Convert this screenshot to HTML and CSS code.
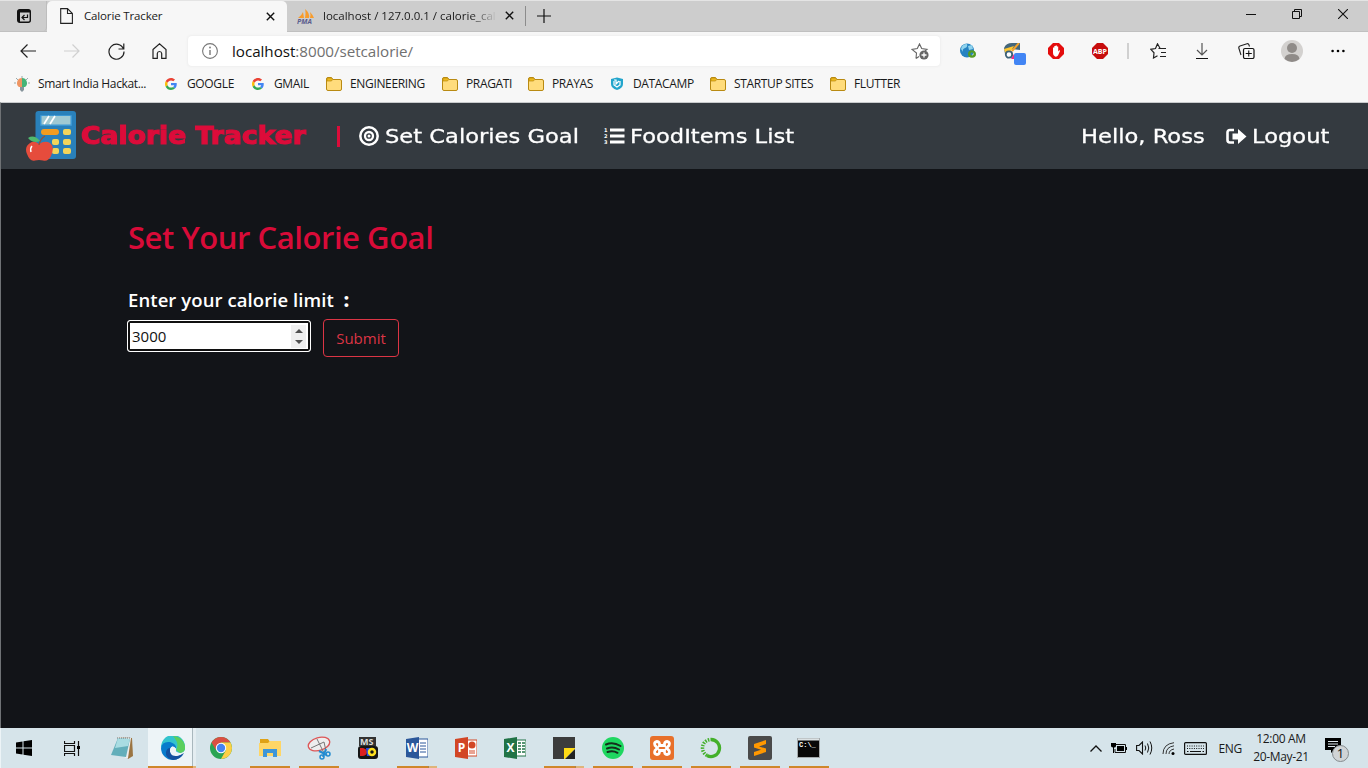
FILE: index.html
```html
<!DOCTYPE html>
<html lang="en">
<head>
<meta charset="utf-8">
<title>Calorie Tracker</title>
<link rel="stylesheet" href="styles.css">
</head>
<body>
<svg width="0" height="0" class="defs">
  <symbol id="folder" viewBox="0 0 16 16"><path d="M.5 3Q.5 1.5 2 1.5H5.5L7 3.5H14Q15.5 3.500 15.5 5V13Q15.500 14.500 14 14.500H2Q.5 14.500 .5 13Z" fill="#ffdc7c" stroke="#b98a12"/><path d="M1 2H5.500L6.500 3.500L5.500 5H1Z" fill="#edb91d" stroke="#b98a12" stroke-width=".7"/></symbol>
  <symbol id="google" viewBox="0 0 48 48"><path fill="#EA4335" d="M24 9.500c3.540 0 6.710 1.220 9.210 3.600l6.850-6.850C35.900 2.380 30.470 0 24 0 14.620 0 6.510 5.380 2.560 13.220l7.980 6.190C12.430 13.720 17.740 9.500 24 9.500z"/><path fill="#4285F4" d="M46.980 24.550c0-1.570-.15-3.090-.38-4.550H24v9.020h12.940c-.58 2.960-2.260 5.480-4.780 7.180l7.730 6c4.510-4.180 7.090-10.360 7.090-17.650z"/><path fill="#FBBC05" d="M10.530 28.590c-.48-1.450-.76-2.990-.76-4.590s.27-3.140.76-4.590l-7.980-6.190C.92 16.460 0 20.120 0 24s.92 7.540 2.560 10.780z"/><path fill="#34A853" d="M24 48c6.480 0 11.930-2.130 15.890-5.810l-7.730-6c-2.150 1.450-4.920 2.300-8.160 2.300-6.260 0-11.570-4.220-13.470-9.910l-7.980 6.190C6.510 42.620 14.620 48 24 48z"/></symbol>
</svg>

<header class="titlebar">
  <div class="tab-actions"><svg width="14" height="14" viewBox="0 0 14 14"><rect x=".7" y=".7" width="12.600" height="12.600" rx="2" fill="none" stroke="#111" stroke-width="1.400"/><path d="M1 1H13V3.500H1ZM1 1H3V13H1Z" fill="#111"/><path d="M10.500 5.500V8.500H5.500M7.500 6L5 8.500L7.500 11" fill="none" stroke="#111" stroke-width="1.200"/></svg></div>
  <div class="tab active">
    <svg width="13" height="16" viewBox="0 0 13 16"><path d="M.7.6H7.500L12.400 5.500V15.400H.7ZM7.500.6V5.500H12.400" fill="none" stroke="#222" stroke-width="1.100"/></svg>
    <span class="tab-title first">Calorie Tracker</span>
    <svg class="close" width="9" height="9" viewBox="0 0 9 9"><path d="M.8.8L8.200 8.200M8.200.8L.8 8.200" stroke="#111" stroke-width="1.400"/></svg>
  </div>
  <div class="tab second">
    <svg width="18" height="16" viewBox="0 0 18 16"><path d="M1 10Q5 7 6 4L7 10ZM8 10Q9 4 8 1Q13 5 12 10ZM13 10Q14 7 13 4Q16 7 17 10Z" fill="#f89c2c"/><text x="0" y="15.500" class="pma">PMA</text></svg>
    <span class="tab-title fade">localhost / 127.0.0.1 / calorie_cal</span>
    <svg class="close" width="9" height="9" viewBox="0 0 9 9"><path d="M.8.8L8.200 8.200M8.200.8L.8 8.200" stroke="#111" stroke-width="1.400"/></svg>
  </div>
  <svg class="plus" width="14" height="14" viewBox="0 0 14 14"><path d="M7 0V14M0 7H14" stroke="#111" stroke-width="1.200"/></svg>
  <div class="window-buttons">
    <svg width="10" height="10"><path d="M0 5.500H10" stroke="#111"/></svg>
    <svg width="10" height="10"><path d="M.5 2.500H7.500V9.500H.5ZM2.500 2.500V.5H9.500V7.500H7.500" fill="none" stroke="#111"/></svg>
    <svg width="10" height="10"><path d="M0 0L10 10M10 0L0 10" stroke="#111" stroke-width="1.100"/></svg>
  </div>
</header>

<section class="toolbar">
  <div class="cell"><svg width="16" height="14" viewBox="0 0 16 14"><path d="M7.500.5L1 7L7.500 13.500M1 7H16" fill="none" stroke="#222" stroke-width="1.200"/></svg></div>
  <div class="cell"><svg width="16" height="14" viewBox="0 0 16 14"><path d="M8.500.5L15 7L8.500 13.500M15 7H0" fill="none" stroke="#d0d0d0" stroke-width="1.200"/></svg></div>
  <div class="cell"><svg width="17" height="17" viewBox="0 0 17 17"><path d="M15.500 6A7.500 7.500 0 1 0 16 8.500M15.800.5V6H10.500" fill="none" stroke="#222" stroke-width="1.200"/></svg></div>
  <div class="cell"><svg width="16" height="16" viewBox="0 0 16 16"><path d="M1 6.500L7.500 .8L14 6.500V15.300H9.700V10.500Q9.500 8.500 7.500 8.500T5.300 10.500V15.300H1Z" fill="none" stroke="#222" stroke-width="1.200"/></svg></div>
  <div class="address">
    <svg width="16" height="16" viewBox="0 0 16 16"><circle cx="8" cy="8" r="7.400" fill="none" stroke="#777" stroke-width="1.100"/><path d="M8 7V12" stroke="#777" stroke-width="1.400"/><circle cx="8" cy="4.500" r=".9" fill="#777"/></svg>
    <span class="url">localhost<span>:8000/setcalorie/</span></span>
    <svg width="19" height="17" viewBox="0 0 19 17"><path d="M5 15.500L5.500 10L1 6.400L6.300 5.500L8.500.9L10.700 5.500L16 6.400L14 8M5 15.500L8 13.500" fill="none" stroke="#666" stroke-width="1.100"/><circle cx="13" cy="12" r="4.600" fill="#666"/><path d="M13 9.500V14.500M10.500 12H15.500" stroke="#fff" stroke-width="1.300"/></svg>
  </div>
  <div class="cell"><svg width="16" height="16" viewBox="0 0 16 16"><circle cx="7" cy="7.500" r="7" fill="#2683c2"/><path d="M1 6Q2 1 7 1Q8 4 5 5T3 9ZM8 3L12 2L13 6L9 7Z" fill="#8fd3ed"/><ellipse cx="12" cy="11" rx="2.800" ry="2.600" fill="none" stroke="#549d23" stroke-width="2.400"/></svg></div>
  <div class="cell"><svg class="paint" width="22" height="22" viewBox="0 0 22 22"><path d="M0 5Q2 0 8 0H16V7L8 6L1 11Z" fill="#45677a"/><path d="M0 6L10 3L7 8L2 12Z" fill="#ffc72e"/><path d="M15 0L8 8" stroke="#f4a22b" stroke-width="2"/><circle cx="5" cy="11.500" r="3.200" fill="#fff" stroke="#3c6178" stroke-width="1.800"/><path d="M7 16L10 11V16Z" fill="#f42b89"/><rect x="10" y="10" width="12" height="12" rx="2" fill="#4285f4"/></svg></div>
  <div class="cell"><svg width="16" height="16" viewBox="0 0 16 16"><path d="M5 0H11L16 5V11L11 16H5L0 11V5Z" fill="#e40d0d"/><path d="M5 8V4.500H6.300V3H7.600V2.500H8.900V3.500H10.200V8.500L11.500 7L12 8L10 12.500Q9 14 7 13.500Q5 13 5 10Z" fill="#fff"/></svg></div>
  <div class="cell"><svg width="16" height="16" viewBox="0 0 16 16"><path d="M5 0H11L16 5V11L11 16H5L0 11V5Z" fill="#c70d0d"/><text x="8" y="10.800" class="abp" textLength="14" lengthAdjust="spacingAndGlyphs">ABP</text></svg></div>
  <i class="rule"></i>
  <div class="cell"><svg width="17" height="16" viewBox="0 0 17 16"><path d="M10 5.200L7.500.8L5.500 5.500L.8 6.300L4 9.800L3.500 15L7.500 12.700M8.500 5.500H16M11 9.500H16M10 13.500H16" fill="none" stroke="#222" stroke-width="1.200"/></svg></div>
  <div class="cell"><svg width="12" height="16" viewBox="0 0 12 16"><path d="M6 0V12M1 7L6 12L11 7" fill="none" stroke="#555" stroke-width="1.200"/><path d="M0 15.500H12" stroke="#111"/></svg></div>
  <div class="cell"><svg width="17" height="16" viewBox="0 0 17 16"><path d="M3 12L.8 5Q.5 3.500 2 3L9 .7Q10.500.4 11 2L11.500 3.500" fill="none" stroke="#222" stroke-width="1.100"/><rect x="5.500" y="5.500" width="10.500" height="10" rx="1.500" fill="none" stroke="#111" stroke-width="1.200"/><path d="M10.750 7.500V13.500M7.700 10.500H13.800" stroke="#111" stroke-width="1.100"/></svg></div>
  <div class="cell profile"><svg width="22" height="22" viewBox="0 0 22 22"><circle cx="11" cy="11" r="11" fill="#d3d1cf"/><circle cx="11" cy="8" r="5" fill="#8f8b88"/><path d="M3.500 19Q4 14 11 14T18.500 19Q11 25 3.500 19Z" fill="#8f8b88"/></svg></div>
  <div class="cell"><svg width="14" height="4"><circle cx="1.600" cy="2" r="1.300"/><circle cx="7" cy="2" r="1.300"/><circle cx="12.400" cy="2" r="1.300"/></svg></div>
</section>

<nav class="bookmarks">
  <a><svg viewBox="0 0 16 16"><path d="M8 0V2M2 2L4 4M14 2L12 4M0 7H2M14 7H16" stroke="#9aa"/><path d="M8 2A5 5 0 0 0 5 11H8Z" fill="#ef9563"/><path d="M8 2A5 5 0 0 1 11 11H8Z" fill="#45b478"/><path d="M6 11H10V14L8 16L6 14Z" fill="#86949b"/></svg><span>Smart India Hackat...</span></a>
  <a class="g"><svg viewBox="0 0 16 16"><use href="#google" x="1" y="2" width="12" height="12"/></svg><span>GOOGLE</span></a>
  <a class="g"><svg viewBox="0 0 16 16"><use href="#google" x="1" y="2" width="12" height="12"/></svg><span>GMAIL</span></a>
  <a><svg><use href="#folder"/></svg><span>ENGINEERING</span></a>
  <a><svg><use href="#folder"/></svg><span>PRAGATI</span></a>
  <a><svg><use href="#folder"/></svg><span>PRAYAS</span></a>
  <a class="g"><svg viewBox="0 0 16 16"><path d="M1 3L7 1.500L13 3V8Q13 12 7 14Q1 12 1 8Z" fill="#22a5cc"/><path d="M4 4H6V8L9 5M4 5V9L7 11L10 9V5" fill="none" stroke="#fff" stroke-width="1.200"/></svg><span>DATACAMP</span></a>
  <a><svg><use href="#folder"/></svg><span>STARTUP SITES</span></a>
  <a><svg><use href="#folder"/></svg><span>FLUTTER</span></a>
</nav>

<div class="page">
  <nav class="navbar">
    <svg class="logo" width="50" height="50" viewBox="0 0 50 50"><rect x="9.500" width="40.500" height="48" rx="3" fill="#2980ba"/><rect x="14" y="4" width="32" height="11" rx="1" fill="#3b97d3"/><rect x="15.500" y="5" width="29" height="8.500" fill="#9fc9d3"/><path d="M18 13L23 5M24 13L29 5" stroke="#fff" stroke-width="1.700"/><rect x="15" y="18" width="18" height="6" rx="3" fill="#f29c1f"/><g fill="#f3d55b"><rect x="37" y="18" width="8" height="6" rx="2"/><rect x="26" y="28" width="7" height="6" rx="2"/><rect x="37" y="28" width="8" height="6" rx="2"/><rect x="26" y="37" width="7" height="6" rx="2"/><rect x="37" y="37" width="8" height="6" rx="2"/></g><path d="M13 33Q8 29 4 32Q-2 36 1 43Q4 51 9 49.500Q13 48.500 17 49.500Q22 51 25 45Q29 36 24 32Q19 29 13 33Z" fill="#e64c3c"/><path d="M13 34Q14 28 19 25" fill="none" stroke="#955137" stroke-width="1.400"/><path d="M2 27Q8 23 14 30Q7 33 2 27Z" fill="#4fba6f"/><path d="M5 41Q4 37 6 35" stroke="#fff" stroke-width="1.500" fill="none"/></svg>
    <span class="brand">Calorie Tracker</span>
    <i class="bar"></i>
    <a class="link goal"><svg width="20" height="20" viewBox="0 0 20 20" fill="none" stroke="#fff"><circle cx="10" cy="10" r="8.700" stroke-width="2.500"/><circle cx="10" cy="10" r="4" stroke-width="2.300"/><circle cx="10" cy="10" r="1.500" fill="#fff" stroke="none"/></svg><span>Set Calories Goal</span></a>
    <a class="link items"><svg width="21" height="18" viewBox="0 0 21 18"><path d="M6 3H20.500M6 9H20.500M6 15H20.500" stroke="#fff" stroke-width="3"/><text x="0" y="5" class="digit">1</text><text x="0" y="11" class="digit">2</text><text x="0" y="17" class="digit">3</text></svg><span>FoodItems List</span></a>
    <span class="link hello"><span>Hello, Ross</span></span>
    <a class="link logout"><svg width="21" height="17" viewBox="0 0 21 17"><path d="M8 2H4Q1.500 2 1.500 4.500V12Q1.500 14.500 4 14.500H8" fill="none" stroke="#fff" stroke-width="2.600"/><path d="M6.500 5.500H12V1L20.500 8.500L12 16V11.500H6.500Z" fill="#fff"/></svg><span>Logout</span></a>
  </nav>
  <main class="content">
    <h2>Set Your Calorie Goal</h2>
    <label for="limit">Enter your calorie limit <b>:</b></label>
    <div class="form">
      <div class="number"><input id="limit" value="3000"><div class="spin"><svg width="8" height="18" viewBox="0 0 8 18"><path d="M0 6L4 2L8 6ZM0 13L4 17L8 13Z" fill="#505050"/></svg></div></div>
      <button>Submit</button>
    </div>
  </main>
</div>

<footer class="taskbar">
  <div class="slot start"><svg width="16" height="16" viewBox="0 0 16 16"><path d="M0 2.500L6.500 1.500V7.500H0ZM7.500 1.300L16 0V7.500H7.500ZM0 8.500H6.500V14.500L0 13.500ZM7.500 8.500H16V16L7.500 14.700Z"/></svg></div>
  <div class="slot start"><svg width="17" height="15" viewBox="0 0 17 15"><path d="M.5 0V2.500H10.500V0M.5 15V12.500H10.500V15M.5 4.500H10.500V10.500H.5ZM14.500 0V15" fill="none" stroke="#111" stroke-width="1.200"/><path d="M13 5H16V8H13Z"/></svg></div>
  <div class="slot notes"><svg width="24" height="24" viewBox="0 0 24 24"><path d="M8 1L22 2L23 20L18 23Z" fill="#9b7542"/><path d="M8 1L21 2L18 22L15 22Z" fill="#eee"/><path d="M8 2L20 3L16 21L1 19Z" fill="#63aeba"/><path d="M8 2L20 3L18 10L5 12Z" fill="#a9dce2"/><path d="M7 2H21" stroke="#777" stroke-dasharray="1 1"/></svg></div>
  <div class="slot selected"><svg width="24" height="24" viewBox="0 0 24 24"><path d="M0 12A12 12 0 0 1 24 10Q25 16 19 17Q14 17 15 13Q14 7 7 8Q2 8 0 12Z" fill="#33c3cd"/><path d="M12 0A12 12 0 0 1 24 10Q25 16 19 17L15 14Q19 8 12 0Z" fill="#5bcf5d"/><path d="M0 12Q1 5 9 6Q16 8 15 13Q11 8 9 13Q8 20 15 22Q20 21 23 17Q19 24 12 24A12 12 0 0 1 0 12Z" fill="#087ccc"/><path d="M9 12Q8 21 16 20Q20 19 23 17Q19 24 12 24Q4 22 5 16Q6 12 9 12Z" fill="#13509e"/><path d="M15 12.500Q11 8.500 9.500 13Q10 19 16 19.500Q20 19 22 16.500Q18 18 15 15.500Q14 14 15 12.500Z" fill="#edf4f7"/></svg></div>
  <div class="slot"><svg width="22" height="22" viewBox="0 0 22 22"><circle cx="11" cy="11" r="11" fill="#2aa454"/><path d="M1.500 5.500A11 11 0 0 1 20.500 5.500H11L6 13Z" fill="#da4f43"/><path d="M11 5.500H20.500A11 11 0 0 1 11 22L16 13Z" fill="#fdcf46"/><circle cx="11" cy="11" r="5.200" fill="#fff"/><circle cx="11" cy="11" r="4.200" fill="#4583f1"/></svg></div>
  <div class="slot run"><svg width="22" height="20" viewBox="0 0 22 20"><path d="M1 1H9L11 4H21V18H1Z" fill="#dfa216"/><path d="M1 5H9L11 3H22V18H0V5Z" fill="#ffd666"/><path d="M4 19V11H18V19H14V15H8V19Z" fill="#3e96d9"/></svg></div>
  <div class="slot run"><svg width="24" height="24" viewBox="0 0 24 24"><ellipse cx="12" cy="8" rx="11" ry="6.500" transform="rotate(-16 12 8)" fill="#eee" stroke="#dd5657" stroke-width="1.300"/><path d="M10 3L17 17M4 12L17 6L19 15" stroke="#777" fill="none"/><path d="M12 15L20 19M19 13L16 21" stroke="#238bd0" stroke-width="2"/><circle cx="21" cy="18" r="2" fill="none" stroke="#238bd0" stroke-width="1.500"/><circle cx="15" cy="21" r="2" fill="none" stroke="#238bd0" stroke-width="1.500"/></svg></div>
  <div class="slot"><svg width="20" height="24" viewBox="0 0 20 24"><rect x="1" y="1" width="17" height="9" fill="#333"/><text x="2" y="9" class="ms">MS</text><rect y="10" width="20" height="13" rx="3" fill="#151515"/><path d="M2 12H5Q9 13 9 16T5 20H2Z" fill="#dc2020"/><path d="M8 12H12V20H9Z" fill="#254ce3"/><circle cx="14" cy="16" r="3" fill="none" stroke="#ffe11f" stroke-width="2.500"/></svg></div>
  <div class="slot run multi"><svg width="22" height="22" viewBox="0 0 22 22"><path d="M12 2H22V20H12Z" fill="#fff" stroke="#2b579a"/><path d="M14 6H20M14 9H20M14 12H20M14 15H20" stroke="#2b579a"/><path d="M0 2L13 0V22L0 20Z" fill="#2b579a"/><text x="6.500" y="15" class="office">W</text></svg></div>
  <div class="slot"><svg width="22" height="22" viewBox="0 0 22 22"><path d="M12 3H22V19H12Z" fill="#fff" stroke="#d24625"/><circle cx="17" cy="8" r="3.500" fill="#d24625"/><path d="M14 14H20M14 16H20" stroke="#d24625"/><path d="M0 2L13 0V22L0 20Z" fill="#d24625"/><text x="6.500" y="15" class="office">P</text></svg></div>
  <div class="slot"><svg width="22" height="22" viewBox="0 0 22 22"><path d="M12 3H22V19H12Z" fill="#fff" stroke="#217346"/><path d="M14 6H21M14 9H21M14 12H21M14 15H21" stroke="#217346" stroke-width="1.700"/><path d="M17.500 4V18" stroke="#fff"/><path d="M0 2L13 0V22L0 20Z" fill="#217346"/><text x="6.500" y="15" class="office">X</text></svg></div>
  <div class="slot run multi"><svg width="22" height="22" viewBox="0 0 22 22"><path d="M0 0H22V11L11 22H0Z" fill="#3c3c3c"/><path d="M11 11H22V12L12 22H11Z" fill="#ffdb16"/><path d="M22 12V22H12Z" fill="#222"/></svg></div>
  <div class="slot run"><svg width="22" height="22" viewBox="0 0 22 22"><circle cx="11" cy="11" r="11" fill="#1ed760"/><path d="M4 7.500Q11 4.500 18.500 9M5 11.500Q11 9 17 12.500M5.500 15Q11 13 15.500 15.800" stroke="#142e1c" fill="none" stroke-width="2" stroke-linecap="round"/></svg></div>
  <div class="slot run"><svg width="24" height="24" viewBox="0 0 24 24"><rect width="24" height="24" rx="3" fill="#e8702a"/><path d="M9.500 9.500Q10 5.500 7 5.500Q3.500 6 5 9.500L7.500 12L5 14.500Q3.500 18 7 18.500Q10 18.500 9.500 14.500H14.500Q14 18.500 17 18.500Q20.500 18 19 14.500L16.500 12L19 9.500Q20.500 6 17 5.500Q14 5.500 14.500 9.500Z" fill="none" stroke="#fff" stroke-width="2.800"/></svg></div>
  <div class="slot run"><svg width="22" height="22" viewBox="0 0 22 22"><path d="M11 2.500A8.500 8.500 0 1 1 7 18.500" fill="none" stroke="#43b02a" stroke-width="3.300"/><path d="M7 18.500A8.500 8.500 0 0 1 11 2.500" fill="none" stroke="#43b02a" stroke-width="3.500" stroke-dasharray="1.500 1.200"/></svg></div>
  <div class="slot run"><svg width="24" height="24" viewBox="0 0 24 24"><rect width="24" height="24" rx="2" fill="#4a4a4a"/><path d="M6 8L18 4V8L11 10.500L18 12.500V16L6 20V16L13 13.700L6 11.500Z" fill="#ff9800"/></svg></div>
  <div class="slot run"><svg width="23" height="20" viewBox="0 0 23 20"><rect x=".5" y=".5" width="22" height="19" fill="#080808" stroke="#a4a9ab"/><path d="M1 1.500H22" stroke="#dce2e4" stroke-width="2"/><text x="2" y="9" class="cmd">C:\_</text></svg></div>
  <div class="tray">
    <svg width="12" height="7" viewBox="0 0 12 7"><path d="M.5 6.500L6 1L11.500 6.500" fill="none" stroke="#111" stroke-width="1.300"/></svg>
    <svg width="16" height="12" viewBox="0 0 16 12"><path d="M4.500 2.500H14.500V10.500H4V7" fill="none" stroke="#111"/><path d="M6 4H13V9H6ZM15 5H16V8H15ZM0 1H5V4Q5 5.500 3 5.500V11H2V5.500Q0 5 0 4Z"/></svg>
    <svg width="17" height="14" viewBox="0 0 17 14"><path d="M.6 4.500H3L6.500 1V13L3 9.500H.6Z" fill="none" stroke="#111" stroke-width="1.100"/><path d="M9 4.500Q10.500 7 9 9.500M11.500 2.500Q14 7 11.500 11.500M14 .5Q17.500 7 14 13.500" fill="none" stroke="#111"/></svg>
    <svg width="13" height="13" viewBox="0 0 13 13"><circle cx="11" cy="11.500" r="1.500"/><path d="M1 12Q1 2 12 .7M4 12Q4 5 12 3.800M7 12Q7 8 12 7" fill="none" stroke="#333"/></svg>
    <svg width="23" height="13" viewBox="0 0 23 13"><rect x=".6" y=".6" width="21.800" height="11.800" rx="1" fill="none" stroke="#111" stroke-width="1.200"/><path d="M3 4H20M3 6.500H20" stroke="#111" stroke-dasharray="1 1.300"/><path d="M3 9.500H4.500M6 9.500H17M18.500 9.500H20" stroke="#111"/></svg>
    <span class="lang">ENG</span>
    <div class="clock"><span>12:00 AM</span><span>20-May-21</span></div>
    <svg class="notice" width="25" height="26" viewBox="0 0 25 26"><path d="M0 1H16V13H9L6 16V13H0Z"/><path d="M3 4.500H13M3 7H13M3 9.500H10" stroke="#dce6eb"/><circle cx="15.500" cy="16.500" r="8" fill="#d0d4d6" stroke="#858b8e"/><text x="15.500" y="21" class="count">1</text></svg>
  </div>
</footer>
</body>
</html>
```
FILE: styles.css
```css
* { box-sizing: border-box; }
body { margin: 0; width: 1368px; height: 768px; display: flex; flex-direction: column; overflow: hidden; font-family: "Open Sans", "Noto Sans", sans-serif; font-size: 11.500px; color: #1a1a1a; background: #f7f7f7; }
svg { display: block; flex: none; }
.defs { height: 0; }
span { white-space: nowrap; }

.titlebar { height: 32px; flex: none; display: flex; background: #cdcdcd; border-top: 1px solid #e4e4e4; border-bottom: 1px solid #c0c0c0; }
.tab-actions { width: 47px; padding: 8px 0 0 17px; border-radius: 0 0 4px 0; border-right: 1px solid #bdbdbd; }
.tab { height: 31px; display: flex; align-items: center; padding-bottom: 1px; }
.tab.active { width: 240px; padding-left: 13px; background: #f7f7f7; border-radius: 5px 5px 0 0; }
.tab-title { margin-left: 11px; letter-spacing: -.15px; }
.tab-title.first { width: 182px; padding-bottom: 2px; }
.tab.second { width: 239px; height: 20px; margin-top: 5px; padding-left: 10px; border-right: 1px solid #8c8c8c; }
.tab.second .tab-title { margin-left: 8px; width: 174px; overflow: hidden; letter-spacing: 0; }
.fade { -webkit-mask-image: linear-gradient(90deg, #000 85%, transparent); mask-image: linear-gradient(90deg, #000 85%, transparent); }
.tab .close { margin-left: 8px; }
.tab.active .close { margin-left: 0; }
.pma { font: italic bold 7px "Open Sans", sans-serif; fill: #5b5e8d; }
.plus { margin: 8px 0 0 11px; }
.window-buttons { margin-left: auto; display: flex; gap: 36px; padding: 8px 20px 0 0; }

.toolbar { height: 38px; flex: none; display: flex; align-items: center; padding-left: 6px; }
.cell { width: 44px; flex: none; display: flex; justify-content: center; }
.address { width: 752px; height: 30px; margin: 0 6px 0 6px; display: flex; align-items: center; padding: 0 10px 0 14px; background: #fff; border-radius: 4px; box-shadow: 0 0 3px #e4e4e4; }
.url { margin: 0 auto 0 14px; font-size: 15.200px; letter-spacing: -.03px; color: #111; }
.url span { color: #707070; }
.rule { width: 2px; height: 16px; margin: 0 7px 0 5px; background: #d0d0d0; }
.paint { margin: 5px 0 0 5px; }
.profile { padding-left: 4px; }
.profile + .cell { padding-left: 8px; }
.abp { font: bold 7.500px "Open Sans", sans-serif; fill: #fff; text-anchor: middle; }

.bookmarks { height: 32px; flex: none; display: grid; grid-template-columns: 150px 87px 75px 116px 86px 82px 100px 120px 100px; padding: 0 0 5px 14px; align-items: center; }
.bookmarks a { display: flex; align-items: center; gap: 8px; font-size: 12px; letter-spacing: -.35px; }
.bookmarks a.g { gap: 7px; }
.bookmarks svg { width: 16px; height: 16px; }

.page { height: 626px; flex: none; background: #121418; border-top: 1px solid #c8cacc; border-left: 1px solid #6f7275; }
.navbar { height: 66px; display: flex; align-items: center; background: #343a40; padding: 0 37px 0 25px; }
.brand { width: 227px; margin-left: 5px; font: bold 24px "DejaVu Sans", sans-serif; color: #dc0c3a; -webkit-text-stroke: 1.200px #dc0c3a; transform: scaleX(1.110); transform-origin: left; }
.bar { width: 3px; height: 21px; margin-left: 29px; background: #dc0c3a; }
.link { display: flex; align-items: center; gap: 6px; color: #fff; font: 20px "DejaVu Sans", sans-serif; -webkit-text-stroke: .3px #fff; }
.link > span { transform: scaleX(1.130); transform-origin: left; }
.link svg { -webkit-text-stroke: 0; }
.goal { margin-left: 19px; width: 245px; }
.items { gap: 5px; }
.items svg { overflow: visible; }
.hello { margin-left: auto; width: 145px; }
.logout { width: 105px; gap: 5px; }
.digit { font: bold 5px "DejaVu Sans", sans-serif; fill: #fff; }

.content { padding: 44px 0 0 127px; }
h2 { margin: 0; font-size: 31px; line-height: 48px; font-weight: 600; letter-spacing: -.45px; color: #d80b38; white-space: nowrap; }
label { display: block; margin-top: 27px; font-size: 18.500px; line-height: 24px; font-weight: 600; letter-spacing: .08px; color: #fff; white-space: nowrap; }
label b { margin-left: 5px; }
.form { display: flex; margin: 7px 0 0 -1px; gap: 12px; align-items: flex-start; }
.number { width: 184px; height: 32px; margin-top: 1px; border: 1px solid #fff; border-radius: 3px; background: #fff; box-shadow: inset 0 0 0 2px #101010; display: flex; align-items: center; padding: 3px 4px 3px 4px; }
input { width: 159px; height: 24px; border: 0; padding: 0; outline: 0; background: transparent; font: 15px "Open Sans", sans-serif; color: #111; }
.spin { width: 15px; height: 23px; background: #efefef; display: flex; align-items: center; justify-content: center; }
button { width: 76px; height: 38px; border: 1px solid #dc3545; border-radius: 4px; background: transparent; color: #dc3545; font: 15px "Open Sans", sans-serif; padding: 0; }

.taskbar { height: 40px; flex: none; display: flex; background: #d6e4ea; box-shadow: inset 1px 0 #edf4f7; }
.slot { width: 49px; flex: none; height: 40px; position: relative; display: flex; align-items: center; justify-content: center; }
.slot.start { width: 48px; }
.slot.notes { width: 52px; }
.selected { background: linear-gradient(90deg, #edf4f7 44px, #a9b7bd 44px 45px, #e4edf1 45px 48px, transparent 48px); }
.selected::after { content: ""; position: absolute; left: 0; bottom: 0; width: 48px; height: 2px; background: linear-gradient(90deg, #cf872b 45px, #dfb57a 45px); }
.selected + .slot { width: 48px; }
.run::after { content: ""; position: absolute; left: 5px; bottom: 0; width: 40px; height: 2px; background: #cf872b; }
.run.multi::after { background: linear-gradient(90deg, #cf872b 31px, #aa8350 31px 32px, #dfb57a 32px); }
.ms { font: bold 9px "Open Sans", sans-serif; fill: #ddd; }
.office { font: bold 12px "Open Sans", sans-serif; fill: #fff; text-anchor: middle; }
.cmd { font: bold 7px "Liberation Mono", monospace; fill: #fff; }
.tray { margin-left: auto; display: flex; align-items: center; gap: 9px; padding-right: 18px; }
.lang { margin-left: 2px; font-size: 12px; letter-spacing: -.3px; }
.clock { width: 58px; margin-left: 1px; display: flex; flex-direction: column; align-items: center; font-size: 12px; line-height: 18px; letter-spacing: -.35px; }
.notice { margin: 4px 0 0 6px; }
.count { font: 13px "Open Sans", sans-serif; fill: #111; text-anchor: middle; }
```
